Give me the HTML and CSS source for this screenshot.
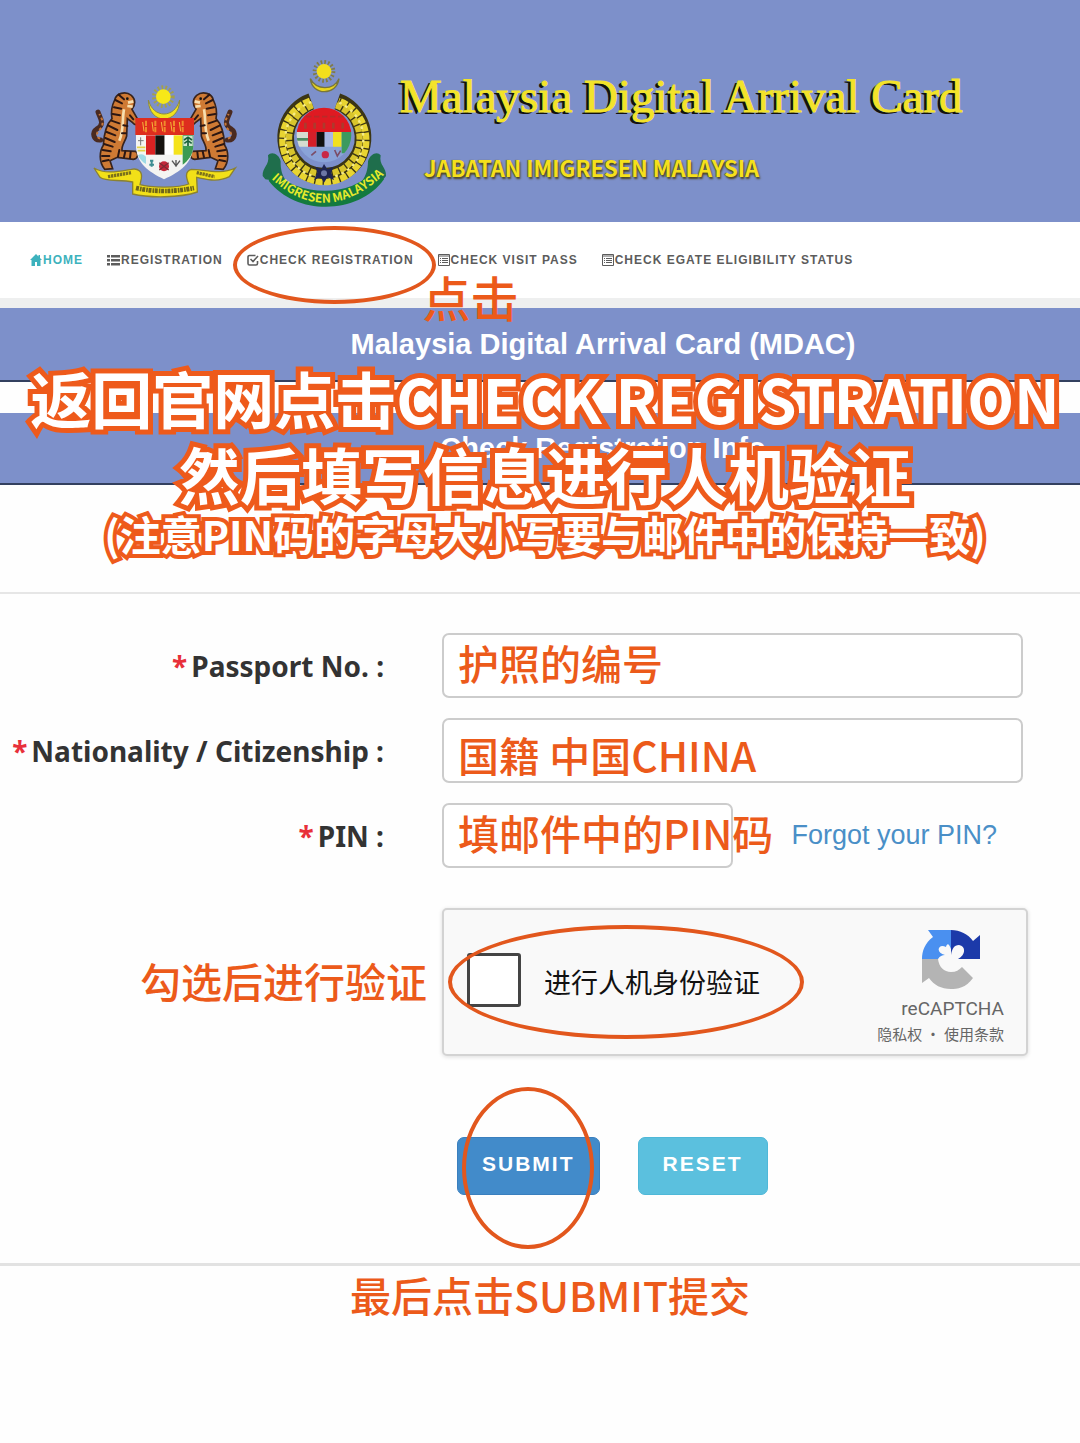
FILE: index.html
```html
<!DOCTYPE html>
<html lang="zh-CN">
<head>
<meta charset="utf-8">
<meta name="viewport" content="width=device-width, initial-scale=1">
<title>Malaysia Digital Arrival Card</title>
<link rel="stylesheet" href="styles.css">
</head>
<body>
<header class="masthead">
  <svg class="crest" viewBox="0 0 480 495" aria-hidden="true">
    <defs>
      <g id="tiger">
        <path d="M62 270 C40 272 34 248 52 236 C76 222 60 204 54 186" fill="none" stroke="#4a2a20" stroke-width="15" stroke-linecap="round"/>
        <path d="M60 266 C46 260 50 246 60 238 C74 222 66 206 58 192" fill="none" stroke="#c8783a" stroke-width="6" stroke-dasharray="8 8"/>
        <path d="M104 150 C108 130 136 122 154 136 C168 148 166 166 156 178 L172 206 C182 222 168 230 158 218 L142 206 L140 258 C136 274 124 286 126 302 L166 304 C178 310 174 326 160 328 L112 322 L90 332 L98 356 L74 358 C56 336 58 304 70 286 C72 250 78 224 96 206 C92 186 96 166 104 150Z" fill="#cf7a34" stroke="#38231c" stroke-width="5"/>
        <path d="M132 178 C126 210 132 240 118 272 M144 158 L160 154 M142 168 L158 170" fill="none" stroke="#f7dfb0" stroke-width="8"/>
        <path d="M106 150 L126 160 M116 134 L132 148 M102 172 L124 176 M98 192 L120 196 M94 212 L118 220 M84 226 L112 240 M80 246 L106 256 M76 264 L104 276 M72 282 L98 290 M68 300 L92 304 M66 318 L88 318 M68 334 L86 330 M130 226 L142 228 M126 250 L138 250 M118 300 L114 320 M136 304 L132 322 M152 306 L150 324 M150 196 L160 208" fill="none" stroke="#2b1613" stroke-width="6" stroke-linecap="round"/>
        <circle cx="142" cy="146" r="4" fill="#111"/>
      </g>
    </defs>
    <path d="M205 150 C206 226 298 226 299 150 C284 206 220 206 205 150Z" fill="#f2e21c" stroke="#8c8a45" stroke-width="3"/>
    <circle cx="250" cy="140" r="27" fill="none" stroke="#a3a04c" stroke-width="14" stroke-dasharray="5 6"/>
    <circle cx="250" cy="140" r="22" fill="#f7e818"/>
    <use href="#tiger"/>
    <use href="#tiger" transform="translate(504 0) scale(-1 1)"/>
    <path d="M168 204 H340 V286 C338 340 300 366 252 388 C206 366 168 340 168 286Z" fill="#f4f4f2"/>
    <path d="M166 204 H342 V255 H166Z" fill="#de2d1e"/>
    <path d="M198 212 V248 M226 212 V248 M254 212 V248 M282 212 V248 M308 212 V248" stroke="#f08a2c" stroke-width="6" stroke-dasharray="16 3"/>
    <path d="M188 216 L192 244 M216 216 L220 244 M244 216 L248 244 M272 216 L276 244 M298 216 L302 244" stroke="#f3b63a" stroke-width="3"/>
    <path d="M198 256 H226 V314 H198Z" fill="#d92222"/>
    <path d="M226 256 H254 V314 H226Z" fill="#15120f"/>
    <path d="M254 256 H281 V314 H254Z" fill="#fff"/>
    <path d="M281 256 H308 V314 H281Z" fill="#f5e31b"/>
    <path d="M308 256 H340 V290 C338 316 324 332 308 344Z" fill="#3d9a52"/>
    <path d="M310 258 H338 V288 H310Z" fill="#cfe6cf"/>
    <path d="M324 260 V288 M312 270 L324 262 L336 270 M313 280 L324 272 L335 280" stroke="#18603a" stroke-width="5" fill="none"/>
    <path d="M171 292 H196 M173 302 H196" stroke="#e3d14b" stroke-width="5"/>
    <path d="M174 316 Q186 308 198 320 V342 Q182 334 174 316Z" fill="#9edbe6"/>
    <path d="M182 262 V286 M174 272 H191" stroke="#777" stroke-width="3"/>
    <circle cx="252" cy="349" r="15" fill="#c3273a"/>
    <path d="M238 338 L266 360 M266 338 L238 360" stroke="#7c2b33" stroke-width="4"/>
    <path d="M208 344 H222 M215 332 V350 M210 332 H220" stroke="#3e8d92" stroke-width="6"/>
    <path d="M276 332 L288 348 L300 332 M288 330 V350" stroke="#555" stroke-width="4" fill="none"/>
    <path d="M42 354 C76 374 118 364 154 358 C174 354 188 364 184 386 L180 404 C214 414 296 414 326 402 C320 386 312 364 334 358 C372 358 420 376 466 354 L448 380 C412 398 380 388 350 382 L352 426 C300 444 206 444 158 432 L158 396 C120 388 76 396 60 382Z" fill="#f2e018" stroke="#8a8132" stroke-width="4"/>
    <path d="M84 380 L154 368 M350 368 L404 380" stroke="#7a701c" stroke-width="10" stroke-dasharray="7 2"/>
    <path d="M168 414 Q250 432 342 414" fill="none" stroke="#6d641a" stroke-width="14" stroke-dasharray="9 3 5 2"/>
  </svg>
  <svg class="crest crest-imi" viewBox="0 0 450 495" role="img" aria-label="Imigresen Malaysia">
    <defs>
      <path id="scroll-line" d="M68 390 Q225 532 398 378"/>
      <clipPath id="disc"><circle cx="222" cy="255" r="82"/></clipPath>
    </defs>
    <path d="M181 86 C186 138 260 138 267 86 C250 122 200 122 181 86Z" fill="#e9d51f" stroke="#77753d" stroke-width="4"/>
    <circle cx="222" cy="64" r="28" fill="none" stroke="#807b46" stroke-width="12" stroke-dasharray="5 6"/>
    <circle cx="222" cy="64" r="22" fill="#f3df1c"/>
    <path d="M184 154 A116 116 0 1 0 262 154" fill="none" stroke="#3b3514" stroke-width="50"/>
    <path d="M180 152 A126 126 0 1 0 266 152" fill="none" stroke="#e8d431" stroke-width="19" stroke-dasharray="21 4"/>
    <path d="M188 166 A106 106 0 1 0 258 166" fill="none" stroke="#d9c52c" stroke-width="19" stroke-dasharray="19 4"/>
    <path d="M184 156 A117 117 0 1 0 262 156" fill="none" stroke="#f6ec86" stroke-width="7" stroke-dasharray="8 12"/>
    <g clip-path="url(#disc)">
      <path d="M130 165 H310 V345 H130Z" fill="#8aa3d8"/>
      <path d="M130 165 H310 V246 H130Z" fill="#df1a22"/>
      <path d="M166 218 V236 M194 218 V236 M222 218 V236 M250 218 V236 M278 218 V236" stroke="#ad3a2d" stroke-width="8"/>
      <path d="M168 200 H280" stroke="#b92a28" stroke-width="5" stroke-dasharray="16 8"/>
      <path d="M138 246 H174 V290 H138Z" fill="#d5dcd0"/>
      <path d="M138 268 H174" stroke="#4d8c62" stroke-width="8"/>
      <path d="M174 246 H200 V290 H174Z" fill="#d41f29"/>
      <path d="M200 246 H224 V290 H200Z" fill="#111"/>
      <path d="M224 246 H249 V290 H224Z" fill="#a9b8e4"/>
      <path d="M249 246 H275 V290 H249Z" fill="#f2e020"/>
      <path d="M275 246 H310 V310 H275Z" fill="#3c9a5f"/>
      <circle cx="226" cy="314" r="11" fill="#c82846"/>
      <path d="M184 316 L198 304 M254 300 L262 318 L272 302" stroke="#7b4d67" stroke-width="5" fill="none"/>
    </g>
    <path d="M38 378 C36 352 60 346 54 316 C64 302 88 312 92 334 C90 384 118 412 150 420 L130 440 L74 392 L46 388Z" fill="#1f6e4c"/>
    <path d="M408 378 C410 352 386 346 392 316 C382 302 360 312 354 334 C354 384 326 412 298 420 L316 440 L372 392 L400 388Z" fill="#1f6e4c"/>
    <path d="M72 362 C140 440 304 446 372 360 L402 388 C330 492 142 502 56 392Z" fill="#137a3f"/>
    <path d="M196 350 L214 358 L222 342 L232 358 L250 350 L244 368 L252 390 L232 382 L222 398 L212 382 L192 390 L202 368Z" fill="#1f2450"/>
    <circle cx="222" cy="370" r="9" fill="#6d77a5"/>
    <text class="scroll-text"><textPath href="#scroll-line" startOffset="50%">IMIGRESEN MALAYSIA</textPath></text>
  </svg>
  <div class="titles">
    <h1 class="title">Malaysia Digital Arrival Card</h1>
    <p class="agency">JABATAN IMIGRESEN MALAYSIA</p>
  </div>
</header>

<nav class="menu">
  <a class="menu-link active" href="#"><svg class="ico" viewBox="0 0 12 12"><path d="M6 0 0 6h1.500v6h3.500V8h2v4h3.500V6H12L10 4V1H8.500v1.500z" fill="currentColor"/></svg>HOME</a>
  <a class="menu-link" href="#"><svg class="ico ico-wide" viewBox="0 0 13 12"><path d="M0 1h3v2.500H0zM4 1h9v2.500H4zM0 5h3v2.500H0zM4 5h9v2.500H4zM0 9h3v2.500H0zM4 9h9v2.500H4z" fill="currentColor"/></svg>REGISTRATION</a>
  <a class="menu-link" href="#"><svg class="ico" viewBox="0 0 12 12"><path d="M8.500 1.500h-6a1.500 1.500 0 0 0-1.500 1.500v6.500A1.500 1.500 0 0 0 2.500 11h6.500a1.500 1.500 0 0 0 1.500-1.500V7M3.500 5 6 7.500 11 2" fill="none" stroke="currentColor" stroke-width="1.600"/></svg>CHECK REGISTRATION<span class="ring ring-menu"></span><span class="note note-click">点击</span></a>
  <a class="menu-link" href="#"><svg class="ico" viewBox="0 0 12 12"><path d="M.5 .5h11v11H.5zM0 2h12M2 4.500h1M4 4.500h6M2 6.500h1M4 6.500h6M2 8.500h1M4 8.500h6" fill="none" stroke="currentColor"/></svg>CHECK VISIT PASS</a>
  <a class="menu-link" href="#"><svg class="ico" viewBox="0 0 12 12"><path d="M.5 .5h11v11H.5zM0 2h12M2 4.500h1M4 4.500h6M2 6.500h1M4 6.500h6M2 8.500h1M4 8.500h6" fill="none" stroke="currentColor"/></svg>CHECK EGATE ELIGIBILITY STATUS</a>
</nav>

<main>
  <section class="intro">
    <h2 class="band">Malaysia Digital Arrival Card (MDAC)</h2>
    <h2 class="band">Check Registration Info</h2>
    <div class="caption">
      <p class="caption-big">返回官网点击CHECK REGISTRATION</p>
      <p class="caption-big">然后填写信息进行人机验证</p>
      <p class="caption-small">(注意PIN码的字母大小写要与邮件中的保持一致)</p>
    </div>
  </section>

  <form class="form">
    <label class="label" for="passport"><span class="star">*</span>Passport No. :</label>
    <div class="control"><input class="field" id="passport" type="text"><span class="note note-field">护照的编号</span></div>

    <label class="label" for="nation"><span class="star">*</span>Nationality / Citizenship :</label>
    <div class="control"><input class="field" id="nation" type="text"><span class="note note-field note-low">国籍 中国CHINA</span></div>

    <label class="label" for="pin"><span class="star">*</span>PIN :</label>
    <div class="control"><input class="field field-pin" id="pin" type="text"><span class="note note-field">填邮件中的PIN码</span><a class="forgot" href="#">Forgot your PIN?</a></div>

    <div class="captcha">
      <input class="tick" id="human" type="checkbox">
      <label class="human" for="human">进行人机身份验证</label>
      <div class="brand">
        <svg class="brand-logo" viewBox="0 0 60 60" aria-hidden="true">
          <path d="M30 1 H7 L12 8 C4 14 1 22 1 30 H17 C19 27 21 26 24 26 C14 24 17 14 25 18 C26 14 28 14 30 20Z" fill="#4a90f0"/>
          <path d="M30 1 C39 1 47 5 52 12 L59 6 V30 H37 C45 26 45 17 38 16 C33 16 31 20 30 26Z" fill="#1c3aa9"/>
          <path d="M1 30 H17 C18 38 23 43 30 43 C35 43 38 41 41 38 L52 49 C45 59 36 60 30 60 C20 60 13 56 8 49 L1 54Z" fill="#b4b4b4"/>
        </svg>
        <span class="brand-name">reCAPTCHA</span>
        <span class="brand-links"><a href="#">隐私权</a> • <a href="#">使用条款</a></span>
      </div>
      <span class="ring ring-captcha"></span>
      <span class="note note-captcha">勾选后进行验证</span>
    </div>

    <div class="actions">
      <button class="btn btn-submit" type="submit">SUBMIT<span class="ring ring-submit"></span></button>
      <button class="btn btn-reset" type="reset">RESET</button>
    </div>
  </form>
  <p class="closing">最后点击SUBMIT提交</p>
</main>
</body>
</html>
```
FILE: styles.css
```css
* { box-sizing: border-box; }

body {
  margin: 0;
  min-height: 100vh;
  background: #fefefe;
  color: #333;
  font-family: "Liberation Sans", "Noto Sans CJK SC", sans-serif;
}

h1, h2, p { margin: 0; }
a { color: inherit; text-decoration: none; }

/* masthead */
.masthead {
  display: flex;
  align-items: flex-start;
  padding: 50px 80px 7px;
  background: #7d90ca;
}
.crest { flex: none; width: 160px; height: 165px; }
.crest-imi { width: 150px; margin-left: 10px; }
.scroll-text {
  font: 700 36px "Noto Sans CJK SC", sans-serif;
  fill: #e6ea2c;
  text-anchor: middle;
}
.titles { white-space: nowrap; padding-top: 22px; }
.title {
  font: 400 47px/48px "Liberation Serif", serif;
  color: #f3e32a;
  -webkit-text-stroke: 1px #f3e32a;
  text-shadow: -3px 2px 0 #111;
}
.agency {
  padding: 25px 0 0 24px;
  font: 700 22px/44px "Noto Sans CJK SC", sans-serif;
  color: #f5e01c;
  text-shadow: 1px 2px 2px #4a4320, -1px 0 1px #6b6128;
}

/* menu */
.menu {
  display: flex;
  gap: 24px;
  padding: 0 30px;
  background: #fff;
  border-bottom: 10px solid #eeefef;
  white-space: nowrap;
}
.menu-link {
  position: relative;
  display: flex;
  align-items: center;
  gap: 1px;
  height: 76px;
  font: 700 12px/20px "Liberation Sans", sans-serif;
  letter-spacing: 1px;
  color: #5c5c5c;
}
.menu-link.active { color: #3db2bd; }
.ico { width: 12px; height: 12px; }
.ico-wide { width: 13px; }

/* hand-drawn style marks laid over the page */
.ring {
  position: absolute;
  z-index: 2;
  border: 4px solid #e2571d;
  border-radius: 50%;
  pointer-events: none;
}
.note, .closing {
  font: 500 41px/48px "Noto Sans CJK SC", sans-serif;
  letter-spacing: 0;
  color: #ec5a1a;
  white-space: nowrap;
}
.note { position: absolute; z-index: 2; pointer-events: none; }
.ring-menu { inset: 4px -22px -6px -14px; }
.note-click { right: -105px; top: 50px; font-size: 48px; }

/* title bands */
.intro {
  position: relative;
  display: grid;
  gap: 31px;
  padding-bottom: 107px;
  border-bottom: 2px solid #e6e6e6;
}
.band {
  padding-left: 126px;
  border-bottom: 2px solid #33405f;
  background: #7d90ca;
  font-size: 29px;
  line-height: 72px;
  text-align: center;
  color: #fff;
}
.band + .band { line-height: 70px; }
.caption {
  position: absolute;
  inset: 52px 0 auto 10px;
  font-family: "Noto Sans CJK SC", sans-serif;
  font-weight: 700;
  color: #fff;
  text-align: center;
  white-space: nowrap;
  -webkit-text-stroke: 10px #ee5a1b;
  paint-order: stroke fill;
}
.caption-big { font-size: 61px; line-height: 76px; }
.caption-small { font-size: 41px; line-height: 42px; -webkit-text-stroke-width: 8px; }

/* form */
.form {
  display: grid;
  grid-template-columns: minmax(0, 384fr) minmax(0, 581fr);
  gap: 20px 58px;
  padding: 39px 57px 68px 0;
  border-bottom: 3px solid #e2e2e2;
}
.label {
  align-self: center;
  font: 700 28px/36px "Noto Sans", sans-serif;
  text-align: right;
  white-space: nowrap;
}
.star { margin-right: 4px; color: #e8303a; }
.control { position: relative; display: flex; align-items: center; }
.field {
  width: 100%;
  height: 65px;
  padding: 0 16px;
  border: 2px solid #ccc;
  border-radius: 7px;
  background: #fff;
  font-size: 28px;
}
.field-pin { width: 50%; }
.note-field { left: 16px; top: 5px; }
.note-low { top: 12px; }
.forgot { margin-left: 59px; font-size: 27px; color: #4a8fc7; white-space: nowrap; }

.captcha {
  position: relative;
  grid-column: 2;
  display: flex;
  align-items: center;
  margin: 20px -5px 0 0;
  padding: 19px 22px 7px 23px;
  border: 2px solid #d3d3d3;
  border-radius: 5px;
  background: #f9f9f9;
  box-shadow: 0 1px 4px #ddd;
}
.tick {
  appearance: none;
  width: 54px;
  height: 54px;
  margin: 0 23px 16px 0;
  border: 3px solid #444;
  border-radius: 3px;
  background: #fff;
}
.human {
  margin-bottom: 12px;
  font: 400 27px/36px "Noto Sans CJK SC", sans-serif;
  color: #111;
}
.brand {
  display: flex;
  flex-direction: column;
  align-items: flex-end;
  margin-left: auto;
  color: #666;
}
.brand-logo { width: 60px; height: 60px; margin-right: 23px; }
.brand-name { padding-top: 8px; font: 400 19px/24px Roboto, sans-serif; }
.brand-links { font: 400 15px/26px "Noto Sans CJK SC", sans-serif; }
.ring-captcha { left: 4px; top: 15px; width: 356px; height: 114px; }
.note-captcha { right: 100%; margin-right: 17px; top: 46px; }

.actions {
  grid-column: 2;
  display: flex;
  gap: 38px;
  margin: 61px 0 0 15px;
}
.btn {
  position: relative;
  height: 58px;
  padding: 0 24px 4px;
  border: 1px solid #3a7fbe;
  border-radius: 7px;
  background: #428bca;
  color: #fff;
  font: 700 21px/28px "Liberation Sans", sans-serif;
  letter-spacing: 2px;
}
.btn-reset { border-color: #4fb8d8; background: #5bc0de; }
.ring-submit { left: 4px; top: -51px; width: 132px; height: 162px; }

.closing { padding: 4px 0 80px 20px; text-align: center; }
```
